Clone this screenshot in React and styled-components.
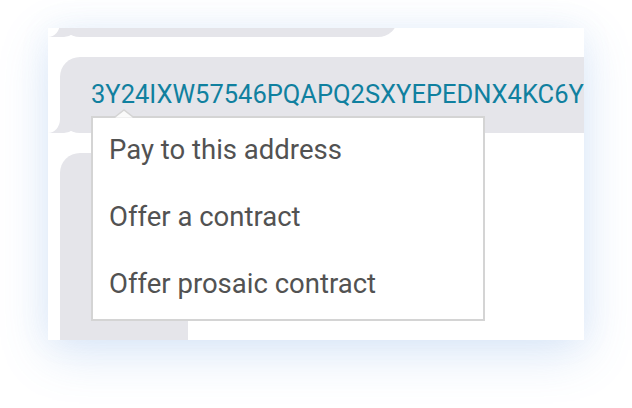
import React from 'react'
import styled, { createGlobalStyle, css } from 'styled-components'

const GlobalStyle = createGlobalStyle`
    html, body {
        margin: 0;
        padding: 0;
        background: #fff;
    }
    body {
        font-family: Roboto, "Noto Sans", sans-serif;
    }
`

const Page = styled.div`
    width: 632px;
    height: 408px;
    box-sizing: border-box;
    padding: 28px 48px 68px;
    overflow: hidden;
`

const Card = styled.div`
    position: relative;
    width: 536px;
    height: 312px;
    background: #fff;
    overflow: hidden;
    box-shadow: 0 14px 48px rgba(80, 140, 220, 0.2), 0 0 30px rgba(120, 160, 230, 0.08);
`

const Thread = styled.div`
    display: flex;
    flex-direction: column;
    gap: 20px;
    padding-left: 12px;
    margin-top: -51px;
`

const GRAY = '#e5e5ea'

const Bubble = styled.div`
    position: relative;
    flex-shrink: 0;
    box-sizing: border-box;
    background: ${GRAY};
    border-radius: 20px;
    width: ${p => p.$w}px;
    height: ${p => p.$h}px;
    display: flex;
    align-items: center;
    padding-left: 31px;
    ${p => p.$tail && css`
        &::before {
            content: '';
            position: absolute;
            left: -12px;
            bottom: 0;
            width: 28px;
            height: 20px;
            background: ${GRAY};
            border-bottom-right-radius: 12px 10px;
        }
        &::after {
            content: '';
            position: absolute;
            left: -24px;
            bottom: 0;
            width: 24px;
            height: 20px;
            background: #fff;
            border-bottom-right-radius: 12px 14px;
        }
    `}
`

const Address = styled.span`
    font-size: 25.5px;
    line-height: 1;
    color: #10809f;
    white-space: nowrap;
`

const Menu = styled.div`
    position: absolute;
    left: 43px;
    top: 88px;
    width: 394px;
    box-sizing: border-box;
    background: #fff;
    border: 2px solid #d4d4d4;
    z-index: 2;
`

const Arrow = styled.svg`
    position: absolute;
    left: 19px;
    top: -9px;
    display: block;
`

const Item = styled.div`
    height: 67px;
    box-sizing: border-box;
    padding: 0 0 3px 16px;
    line-height: 64px;
    font-size: 27.5px;
    color: #525252;
    white-space: nowrap;
`

const items = ['Pay to this address', 'Offer a contract', 'Offer prosaic contract']

export default function App() {
    return (
        <Page>
            <GlobalStyle />
            <Card>
                <Thread>
                    <Bubble $w={338} $h={60} $tail />
                    <Bubble $w={620} $h={76} $tail>
                        <Address>3Y24IXW57546PQAPQ2SXYEPEDNX4KC6Y</Address>
                    </Bubble>
                    <Bubble $w={128} $h={240} />
                </Thread>
                <Menu>
                    <Arrow width="28" height="10" viewBox="0 0 28 10">
                        <polygon points="1,9.5 12,1 23,9.5" fill="#fafafa" stroke="#d4d4d4" strokeWidth="1.5" />
                        <rect x="0" y="9" width="28" height="2" fill="#fff" />
                    </Arrow>
                    {items.map(t => (
                        <Item key={t}>{t}</Item>
                    ))}
                </Menu>
            </Card>
        </Page>
    )
}
